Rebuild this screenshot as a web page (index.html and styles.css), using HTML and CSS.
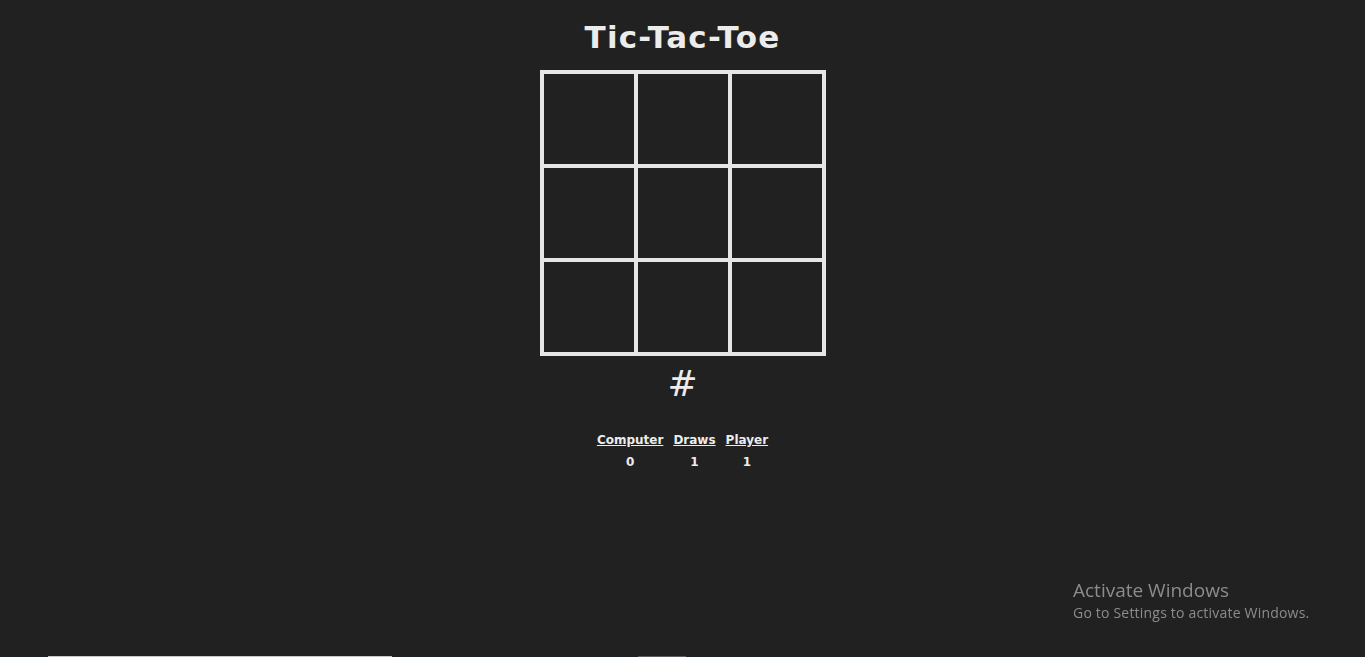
FILE: index.html
```html
<!DOCTYPE html>
<html>
<head>
<meta charset="utf-8">
<title>Tic-Tac-Toe</title>
<link rel="stylesheet" href="styles.css">
</head>
<body>
<main class="game">
  <h1 class="title">Tic-Tac-Toe</h1>
  <div class="board">
    <div class="cell"></div><div class="cell"></div><div class="cell"></div>
    <div class="cell"></div><div class="cell"></div><div class="cell"></div>
    <div class="cell"></div><div class="cell"></div><div class="cell"></div>
  </div>
  <div class="turn">#</div>
  <table class="score">
    <tr><th>Computer</th><th>Draws</th><th>Player</th></tr>
    <tr><td>0</td><td>1</td><td>1</td></tr>
  </table>
</main>
<div class="activate">
  <div class="activate-title">Activate Windows</div>
  <div class="activate-sub">Go to Settings to activate Windows.</div>
</div>
<div class="edge">
  <span class="edge-seg edge-light"></span>
  <span class="edge-seg edge-grey"></span>
</div>
</body>
</html>
```
FILE: styles.css
```css
html, body {
  margin: 0;
  padding: 0;
  background: #212121;
  height: 100%;
}
body {
  color: #ececec;
  font-family: "Comic Sans MS", "DejaVu Sans", sans-serif;
}
.game {
  display: flex;
  flex-direction: column;
  align-items: center;
  padding-top: 17px;
}
.title {
  margin: 0;
  font-size: 31px;
  font-weight: bold;
  line-height: 40px;
  letter-spacing: 1.2px;
}
.board {
  margin-top: 13px;
  display: grid;
  grid-template-columns: repeat(3, 90px);
  grid-template-rows: repeat(3, 90px);
  gap: 4px;
  padding: 4px;
  background: #e6e6e6;
}
.cell {
  background: #212121;
}
.turn {
  margin-top: 8px;
  font-size: 36px;
  line-height: 40px;
}
.score {
  margin-top: 26px;
  border-collapse: collapse;
  font-size: 12px;
  font-weight: bold;
}
.score th {
  text-decoration: underline;
  padding: 0 5px;
  line-height: 20px;
}
.score td {
  text-align: center;
  padding: 0 5px;
  line-height: 24px;
}
.activate {
  position: fixed;
  left: 1073px;
  top: 577px;
  color: #8c8c8c;
  font-family: "Open Sans", "Noto Sans", sans-serif;
}
.activate-title {
  font-size: 19px;
  line-height: 26px;
}
.activate-sub {
  font-size: 14px;
  line-height: 20px;
  letter-spacing: 0.2px;
}
.edge {
  position: fixed;
  left: 0;
  right: 0;
  bottom: 0;
  height: 1px;
  background: #1c2328;
}
.edge-seg {
  position: absolute;
  top: 0;
  height: 1px;
}
.edge-light {
  left: 48px;
  width: 344px;
  background: #c8c8c8;
}
.edge-grey {
  left: 638px;
  width: 48px;
  background: #5a5e62;
}
```
